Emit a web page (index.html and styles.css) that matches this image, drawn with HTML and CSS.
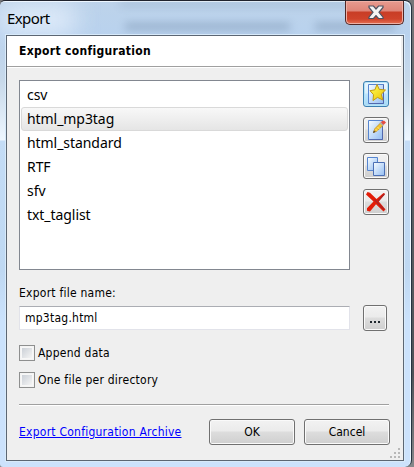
FILE: index.html
```
<!DOCTYPE html>
<html lang="en">
<head>
<meta charset="utf-8">
<title>Export</title>
<link rel="stylesheet" href="styles.css">
</head>
<body>
<div class="desktop">
  <main class="window">
    <div class="backdrop" aria-hidden="true"><i class="smudge s1"></i><i class="smudge s2"></i><i class="smudge s3"></i><i class="smudge s4"></i></div>
    <header class="titlebar">
      <h1>Export</h1>
      <button class="close" aria-label="Close">
        <svg width="16" height="15" viewBox="0 0 16 15"><path d="M1 1h4.500L8 4 10.500 1H15v1.500L11 7.300l4 4.800v1.400h-4.500L8 10.600l-2.500 2.900H1v-1.400l4-4.800-4-4.800z" fill="#f4f4f4" stroke="#4c5362" stroke-width="1.200"/></svg>
      </button>
    </header>
    <section class="client">
      <div class="heading">Export configuration</div>
      <div class="content">
        <div class="configs">
          <ul class="list">
            <li>csv</li>
            <li class="selected">html_mp3tag</li>
            <li>html_standard</li>
            <li>RTF</li>
            <li>sfv</li>
            <li>txt_taglist</li>
          </ul>
          <div class="tools">
            <button class="btn tool focused" aria-label="New">
              <svg width="22" height="22" viewBox="0 0 22 22"><defs><linearGradient id="page" x2="1" y2="1"><stop offset="0" stop-color="#f8fdff"/><stop offset="1" stop-color="#93bdf2"/></linearGradient><linearGradient id="gold" y2="1"><stop offset="0" stop-color="#ffff58"/><stop offset="1" stop-color="#ebc000"/></linearGradient></defs><path d="M3.500 1.500h15v19h-15z" fill="url(#page)" stroke="#5685d0"/><path d="M18.500 1.500v19H4" fill="none" stroke="#5268ad"/><path d="M12 1.500l2.200 4.800 6.300.7-4.200 4.200 1.500 5.800-5.300-2.600-4.500 3.200.5-5.900-3.500-4 4.900-.9z" fill="url(#gold)" stroke="#c39a12"/></svg>
            </button>
            <button class="btn tool" aria-label="Edit">
              <svg width="22" height="22" viewBox="0 0 22 22"><path d="M3.500 1.500h14v19h-14z" fill="url(#page)" stroke="#5685d0"/><path d="M17.500 1.500v19H4" fill="none" stroke="#5268ad"/><path d="M8.500 13.500L10 9.500 15.500 4 18 6.500l-6 5.500z" fill="#f3c52d" stroke="#c18b20" stroke-width=".8"/><path d="M10.500 10l2 2M12.500 8l2 2" stroke="#ffe681"/><path d="M15.500 3L19 1.500 21 3.500 18.500 6z" fill="#e54c42"/><path d="M15 3.500l3 3" stroke="#b5b0aa" stroke-width="1.500"/><path d="M8 14l.8-2.500 1.700 1.500z" fill="#4d4433"/></svg>
            </button>
            <button class="btn tool" aria-label="Duplicate">
              <svg width="22" height="22" viewBox="0 0 22 22"><path d="M2.500 2.500h10v13h-10z" fill="url(#page)" stroke="#5685d0"/><path d="M8.500 7.500h11v13h-11z" fill="url(#page)" stroke="#4c70b5"/></svg>
            </button>
            <button class="btn tool" aria-label="Delete">
              <svg width="22" height="22" viewBox="0 0 22 22"><path d="M1 3.500L2.500 1 5 1.800 11.500 8 18.500 2l1.500.8-6.200 7.800 6.700 7.900-2 2-7.500-7.200L5 20.500l-3-.8v-2.500l6.500-6.700z" fill="#e31d08"/><path d="M9.500 8.500l9.500 10M13 10l6.500-7" fill="none" stroke="#aa2425" stroke-width="1.300"/></svg>
            </button>
          </div>
        </div>
        <label class="caption" for="file">Export file name:</label>
        <div class="file-row">
          <div class="field" id="file"><span>mp3tag.html</span></div>
          <button class="btn browse" aria-label="Browse"><i></i><i></i><i></i></button>
        </div>
        <label class="check"><span class="box"></span><span>Append data</span></label>
        <label class="check"><span class="box"></span><span>One file per directory</span></label>
        <div class="rule"></div>
        <footer class="actions">
          <a class="archive">Export Configuration Archive</a>
          <button class="btn wide">OK</button>
          <button class="btn wide">Cancel</button>
        </footer>
      </div>
      <svg class="grip" width="12" height="12" viewBox="0 0 12 12"><path d="M9 1h2v2H9zM5 5h2v2H5zM9 5h2v2H9zM1 9h2v2H1zM5 9h2v2H5zM9 9h2v2H9z" fill="#b8b8b8"/></svg>
    </section>
  </main>
</div>
</body>
</html>
```
FILE: styles.css
```
* { box-sizing: border-box; }
body { margin: 0; font: 12px/16px "DejaVu Sans Condensed", "DejaVu Sans", sans-serif; font-stretch: condensed; letter-spacing: .24px; color: #000; }
button { font: inherit; color: inherit; padding: 0; margin: 0; }
.desktop { width: 414px; height: 467px; overflow: hidden; background: linear-gradient(#77777a, #606468 30%, #505358 80%, #86888a); }
.window { position: relative; width: 412px; height: 467px; overflow: hidden; border-top: 1px solid #20232d; border-right: 1px solid #263441; border-radius: 5px 7px 7px 3px; background: linear-gradient(#bdd3ea, #b9d2ee 34px, #c8d9ea 80px, #eef6ff 139px, #c4dcf6 140px, #bfd8f2 270px, #cbe2fc 320px, #cce2fc); box-shadow: inset -1px 1px 0 #eef7ff; }
.backdrop { position: absolute; inset: 0; }
.smudge { position: absolute; filter: blur(4px); background: #66809c; }
.s1 { left: 125px; top: 22px; width: 165px; height: 7px; opacity: .42; }
.s2 { left: 120px; top: 1px; width: 275px; height: 4px; opacity: .3; }
.s3 { left: 315px; top: 22px; width: 80px; height: 7px; opacity: .42; }
.s4 { left: 0; top: 4px; width: 75px; height: 29px; opacity: .75; background: #edf5ff; filter: blur(12px); }
.titlebar { position: relative; height: 34px; display: flex; justify-content: space-between; padding: 0 7px 0 7px; }
h1 { margin: 6px 0 0; font: 15px/22px "Noto Sans", sans-serif; letter-spacing: -.6px; }
.close { width: 59px; height: 24px; border: 1px solid #512725; border-top: 0; border-radius: 0 0 5px 5px; background: linear-gradient(#e79b90, #df8578 10px, #c83d26 11px, #cf432b 18px, #e67155); box-shadow: inset 0 0 0 1px #efb0a5; display: flex; align-items: center; justify-content: center; padding-left: 2px; }
.client { position: relative; width: 398px; height: 426px; margin-left: 6px; border: 1px solid #5c6673; background: #efefef; box-shadow: 0 0 0 1px #d8eafa; }
.heading { height: 31px; width: 394px; background: #fff; border-bottom: 1px solid #a0a0a0; box-shadow: 0 1px #fff; padding: 7px 12px; font-weight: bold; letter-spacing: .32px; }
.content { padding: 13px 13px 0 12px; }
.configs { display: flex; justify-content: space-between; height: 190px; }
.list { width: 331px; margin: 0; padding: 2px 1px; list-style: none; background: #fff; border: 1px solid #828790; font: 14px/22px "Noto Sans", sans-serif; }
.list li { height: 24px; padding: 0 5px; border: 1px solid transparent; border-radius: 3px; letter-spacing: -.06px; }
.list .selected { border-color: #d9d9d9; background: linear-gradient(#f8f8f8, #e5e5e5); }
.tools { display: flex; flex-direction: column; gap: 10px; width: 26px; margin-right: 1px; }
.btn { border: 1px solid #707070; border-radius: 3px; background: linear-gradient(#f2f2f2, #ebebeb 46%, #dddddd 50%, #cfcfcf); box-shadow: inset 0 0 0 1px #fafafa; }
.tool { width: 26px; height: 26px; margin-top: 0; display: flex; align-items: center; justify-content: center; flex: none; }
.tools .tool:first-child { margin-top: 1px; }
.focused { border-color: #3c7fb1; background: linear-gradient(#eaf6fd, #d9f0fc 46%, #bee6fd 50%, #a7d9f5); box-shadow: inset 0 0 0 1px #b5e3f8; }
.caption { display: block; margin-top: 15px; height: 16px; }
.file-row { display: flex; justify-content: space-between; align-items: center; margin-top: 4px; height: 26px; }
.field { width: 331px; height: 24px; border: 1px solid #e2e3ea; border-top-color: #abadb3; background: #fff; padding: 3px 5px; }
.browse { width: 24px; height: 26px; display: flex; justify-content: center; gap: 2px; padding-top: 15px; margin-right: 3px; }
.browse i { width: 2px; height: 2px; background: #20282e; }
.check { display: flex; align-items: center; gap: 3px; height: 16px; margin-top: 11px; }
.file-row + .check { margin-top: 14px; }
.box { width: 16px; height: 16px; border: 1px solid #8e8f8f; background: linear-gradient(135deg, #cbd0d7, #f5f5f5) content-box, #f7f7f7; padding: 2px; box-shadow: inset 0 0 0 1px #f4f4f4; }
.rule { height: 2px; width: 370px; background: #a0a0a0; border-bottom: 1px solid #fff; margin-top: 16px; }
.actions { display: flex; margin-top: 13px; align-items: center; }
.archive { width: 190px; color: #00f; text-decoration: underline; white-space: nowrap; }
.wide { width: 86px; height: 26px; }
.wide + .wide { margin-left: 9px; }
.grip { position: absolute; right: 2px; bottom: 1px; }
```
